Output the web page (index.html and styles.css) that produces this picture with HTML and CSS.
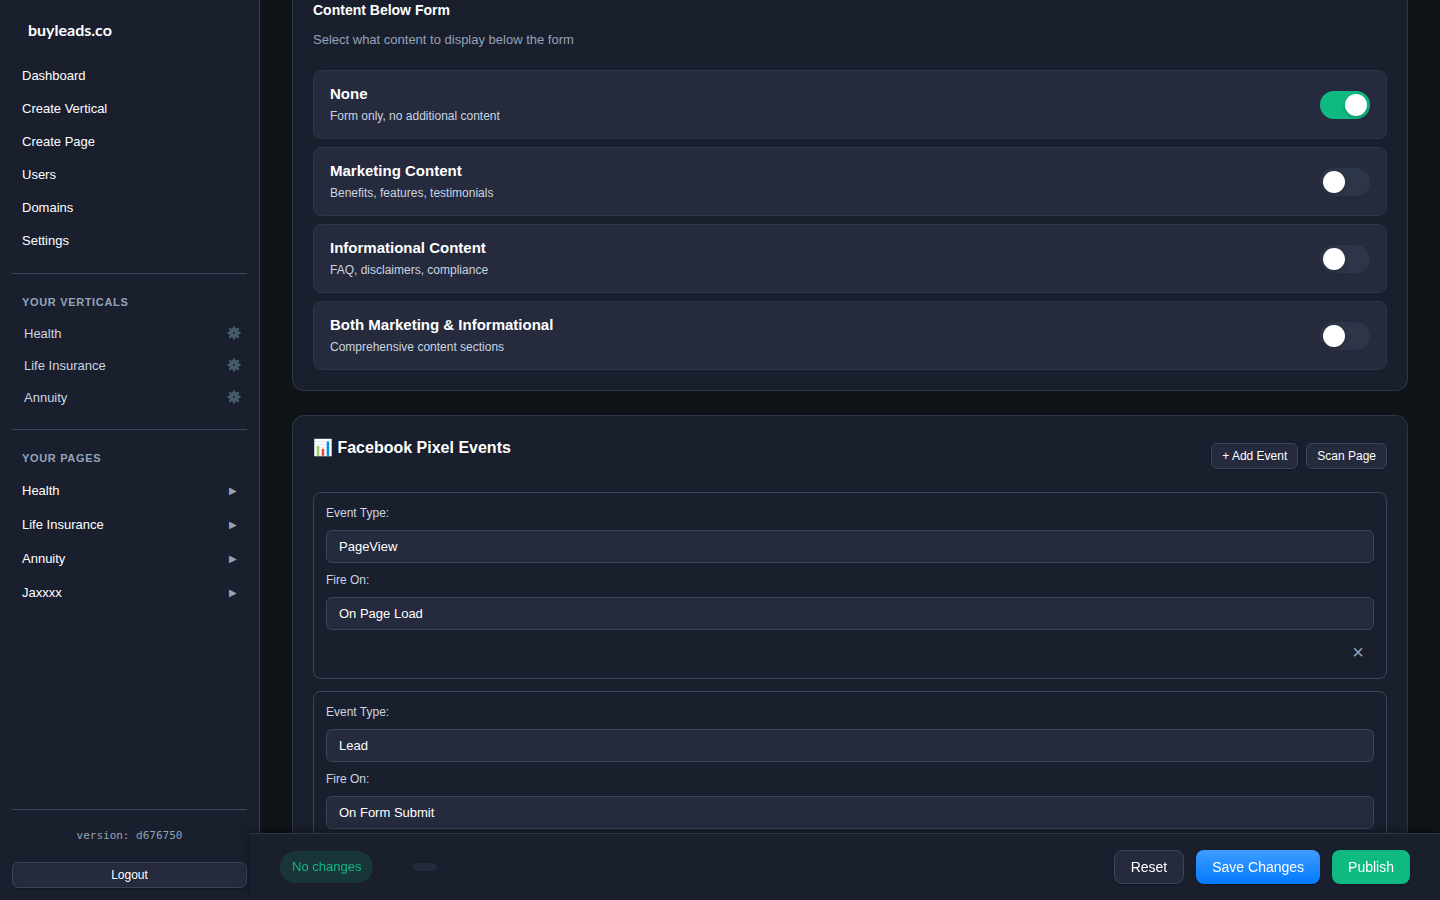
FILE: index.html
```html
<!DOCTYPE html>
<html lang="en">

<head>
    <meta charset="UTF-8">
    <meta name="viewport" content="width=device-width, initial-scale=1.0">
    <title>buyleads.co</title>
    <link rel="stylesheet" href="styles.css">
</head>

<body>
    <!-- gear shape, used by every vertical -->
    <svg class="hidden">
        <symbol id="gear" viewBox="0 0 14 14">
            <g fill="none" stroke="currentColor">
                <circle cx="7" cy="7" r="3.1" stroke-width="4" />
                <path stroke-width="2.2" d="M7 .4v3M7 10.6v3M.4 7h3M10.6 7h3M2.3 2.3l2.1 2.1M9.6 9.6l2.1 2.1M11.7 2.3L9.6 4.4M4.4 9.6l-2.1 2.1" />
            </g>
        </symbol>
    </svg>

    <aside class="sidebar">
        <a class="logo" href="#">buyleads.co</a>

        <nav class="main-nav">
            <a href="#">Dashboard</a>
            <a href="#">Create Vertical</a>
            <a href="#">Create Page</a>
            <a href="#">Users</a>
            <a href="#">Domains</a>
            <a href="#">Settings</a>
        </nav>

        <section class="nav-section">
            <h2>Your Verticals</h2>
            <div class="vertical-item">
                <a href="#">Health</a>
                <button type="button" class="gear" aria-label="Health settings"><svg><use href="#gear" /></svg></button>
            </div>
            <div class="vertical-item">
                <a href="#">Life Insurance</a>
                <button type="button" class="gear" aria-label="Life Insurance settings"><svg><use href="#gear" /></svg></button>
            </div>
            <div class="vertical-item">
                <a href="#">Annuity</a>
                <button type="button" class="gear" aria-label="Annuity settings"><svg><use href="#gear" /></svg></button>
            </div>
        </section>

        <section class="nav-section">
            <h2>Your Pages</h2>
            <button type="button" class="page-item">Health <span class="arrow">▶</span></button>
            <button type="button" class="page-item">Life Insurance <span class="arrow">▶</span></button>
            <button type="button" class="page-item">Annuity <span class="arrow">▶</span></button>
            <button type="button" class="page-item">Jaxxxx <span class="arrow">▶</span></button>
        </section>

        <div class="sidebar-footer">
            <div class="version">version: d676750</div>
            <button type="button" class="btn btn-small">Logout</button>
        </div>
    </aside>

    <main class="content">
        <section class="card card-open">
            <h3>Content Below Form</h3>
            <p class="hint">Select what content to display below the form</p>

            <div class="options">
                <label class="option" for="none">
                    <span class="option-text"><strong>None</strong><small>Form only, no additional content</small></span>
                    <input type="checkbox" class="toggle" id="none" checked>
                </label>
                <label class="option" for="marketing">
                    <span class="option-text"><strong>Marketing Content</strong><small>Benefits, features, testimonials</small></span>
                    <input type="checkbox" class="toggle" id="marketing">
                </label>
                <label class="option" for="informational">
                    <span class="option-text"><strong>Informational Content</strong><small>FAQ, disclaimers, compliance</small></span>
                    <input type="checkbox" class="toggle" id="informational">
                </label>
                <label class="option" for="both">
                    <span class="option-text"><strong>Both Marketing &amp; Informational</strong><small>Comprehensive content sections</small></span>
                    <input type="checkbox" class="toggle" id="both">
                </label>
            </div>
        </section>

        <section class="card">
            <div class="card-header">
                <h2>📊 Facebook Pixel Events</h2>
                <div class="card-actions">
                    <button type="button" class="btn btn-small">+ Add Event</button>
                    <button type="button" class="btn btn-small">Scan Page</button>
                </div>
            </div>

            <div class="events">
                <div class="event">
                    <div class="field">
                        <label for="type1">Event Type:</label>
                        <select id="type1">
                            <option>PageView</option>
                        </select>
                    </div>
                    <div class="field">
                        <label for="fire1">Fire On:</label>
                        <select id="fire1">
                            <option>On Page Load</option>
                        </select>
                    </div>
                    <button type="button" class="remove">×</button>
                </div>
                <div class="event">
                    <div class="field">
                        <label for="type2">Event Type:</label>
                        <select id="type2">
                            <option>Lead</option>
                        </select>
                    </div>
                    <div class="field">
                        <label for="fire2">Fire On:</label>
                        <select id="fire2">
                            <option>On Form Submit</option>
                        </select>
                    </div>
                </div>
            </div>
        </section>
    </main>

    <footer class="action-bar">
        <div class="status">
            <span class="status-pill">No changes</span>
            <span class="status-extra"></span>
        </div>
        <div class="bar-buttons">
            <button type="button" class="btn">Reset</button>
            <button type="button" class="btn btn-primary">Save Changes</button>
            <button type="button" class="btn btn-publish">Publish</button>
        </div>
    </footer>
</body>

</html>
```
FILE: styles.css
```css
* {
    box-sizing: border-box;
}

body {
    display: flex;
    height: 100vh;
    margin: 0;
    overflow: hidden;
    background: #0f1419;
    color: #fff;
    font-family: "Liberation Sans", Arial, sans-serif;
    font-size: 13px;
}

a {
    color: inherit;
    text-decoration: none;
}

button,
select {
    font-family: inherit;
    color: #fff;
}

h2,
h3,
p {
    margin: 0;
}

.hidden {
    display: none;
}

/* Sidebar */
.sidebar {
    display: flex;
    flex-direction: column;
    flex: 0 0 260px;
    padding: 12px;
    background: #1a1f2e;
    border-right: 1px solid #3d4458;
}

.logo {
    padding: 8px 16px;
    margin-bottom: 11px;
    font-family: Lato, sans-serif;
    font-size: 16px;
    font-weight: 700;
    line-height: 20px;
}

.main-nav {
    display: flex;
    flex-direction: column;
    padding-bottom: 16px;
}

.main-nav a {
    padding: 0 10px;
    line-height: 33px;
}

.nav-section {
    display: flex;
    flex-direction: column;
    padding: 20px 0 16px;
    border-top: 1px solid #3d4458;
}

.nav-section h2 {
    padding: 0 10px;
    margin-bottom: 7px;
    color: #94a3b8;
    font-size: 11px;
    line-height: 16px;
    letter-spacing: 0.06em;
    text-transform: uppercase;
}

.vertical-item {
    display: flex;
    align-items: center;
    justify-content: space-between;
    height: 32px;
    padding: 0 6px 0 12px;
    color: #cbd5e1;
}

.gear {
    padding: 0;
    border: none;
    background: none;
    color: #465c6b;
}

.gear svg {
    display: block;
    width: 14px;
    height: 14px;
}

.page-item {
    display: flex;
    align-items: center;
    justify-content: space-between;
    height: 34px;
    padding: 0 10px;
    border: none;
    background: none;
    font-size: 13px;
}

.arrow {
    color: #94a3b8;
    font-size: 10px;
}

.sidebar-footer {
    display: flex;
    flex-direction: column;
    gap: 18px;
    margin-top: auto;
    padding-top: 18px;
    border-top: 1px solid #3d4458;
}

.version {
    color: #94a3b8;
    font-family: "DejaVu Sans Mono", monospace;
    font-size: 11px;
    line-height: 16px;
    text-align: center;
}

/* Buttons */
.btn {
    height: 34px;
    padding: 0 16px;
    border: 1px solid #3d4458;
    border-radius: 8px;
    background: #252a3d;
    font-size: 14px;
    box-shadow: 0 1px 2px rgba(0, 0, 0, 0.3);
}

.btn-small {
    height: 26px;
    padding: 0 10px;
    border-radius: 6px;
    font-size: 12px;
}

.btn-primary {
    border: none;
    background: linear-gradient(#409cff, #007aff);
}

.btn-publish {
    border: none;
    background: #10b981;
}

/* Content */
.content {
    display: flex;
    flex-direction: column;
    gap: 24px;
    flex: 1;
    min-width: 0;
    padding: 0 32px;
}

.card {
    flex: none;
    padding: 20px;
    border: 1px solid #2d3548;
    border-radius: 12px;
    background: #1a1f2e;
}

.card-open {
    padding-top: 0;
    border-top: none;
    border-radius: 0 0 12px 12px;
}

.card-open h3 {
    font-size: 14px;
    line-height: 20px;
}

.hint {
    margin: 10px 0 20px;
    color: #94a3b8;
    font-size: 13px;
    line-height: 20px;
}

.options {
    display: flex;
    flex-direction: column;
    gap: 8px;
}

.option {
    display: flex;
    align-items: center;
    justify-content: space-between;
    padding: 12px 16px;
    border: 1px solid #2d3548;
    border-radius: 8px;
    background: #252a3d;
}

.option-text {
    display: flex;
    flex-direction: column;
    gap: 2px;
}

.option strong {
    font-size: 15px;
    line-height: 21px;
}

.option small {
    color: #cbd5e1;
    font-size: 12px;
    line-height: 20px;
}

.toggle {
    appearance: none;
    width: 50px;
    height: 28px;
    margin: 0;
    padding: 3px;
    border-radius: 14px;
    background: #2d3548;
}

.toggle::before {
    content: "";
    display: block;
    width: 22px;
    height: 22px;
    border-radius: 50%;
    background: #fff;
    box-shadow: 0 2px 4px rgba(0, 0, 0, 0.2);
}

.toggle:checked {
    background: #10b981;
}

.toggle:checked::before {
    margin-left: auto;
}

.card-header {
    display: flex;
    align-items: center;
    justify-content: space-between;
    margin-bottom: 16px;
}

.card-header h2 {
    margin-bottom: 16px;
    font-size: 16px;
    line-height: 24px;
}

.card-actions {
    display: flex;
    gap: 8px;
}

.events {
    display: flex;
    flex-direction: column;
    gap: 12px;
}

.event {
    display: flex;
    flex-direction: column;
    gap: 9px;
    padding: 12px;
    border: 1px solid #3d4458;
    border-radius: 8px;
}

.field {
    display: flex;
    flex-direction: column;
    gap: 8px;
}

.field label {
    color: #cbd5e1;
    font-size: 12px;
    line-height: 17px;
}

.field select {
    appearance: none;
    height: 33px;
    padding: 0 12px;
    border: 1px solid #3d4458;
    border-radius: 6px;
    background: #252a3d;
    font-size: 13px;
}

.remove {
    align-self: flex-end;
    width: 32px;
    height: 27px;
    padding: 0;
    border: none;
    background: none;
    color: #94a3b8;
    font-size: 20px;
}

/* Bottom bar, lies over the sidebar edge and the cards */
.action-bar {
    position: fixed;
    right: 0;
    bottom: 0;
    left: 250px;
    display: flex;
    align-items: center;
    justify-content: space-between;
    padding: 16px 30px;
    border-top: 1px solid #2d3548;
    background: #1a1f2e;
    box-shadow: 0 -2px 10px rgba(0, 0, 0, 0.3);
}

.status {
    display: flex;
    align-items: center;
    gap: 40px;
}

.status-pill {
    padding: 6px 12px;
    border-radius: 16px;
    background: rgba(16, 185, 129, 0.15);
    color: #10b981;
    font-size: 13px;
    line-height: 20px;
}

.status-extra {
    padding: 4px 12px;
    border-radius: 4px;
    background: #252a3d;
}

.bar-buttons {
    display: flex;
    gap: 12px;
}
```
